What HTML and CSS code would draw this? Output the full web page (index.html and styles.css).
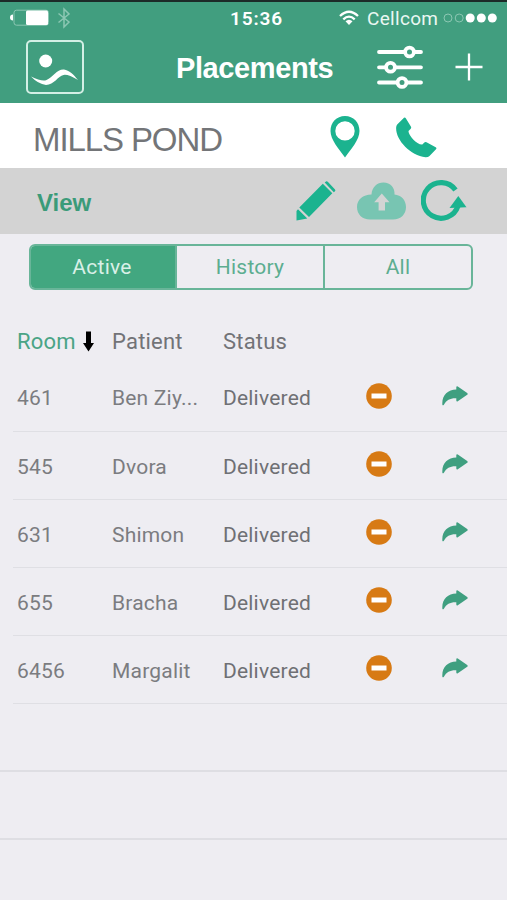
FILE: index.html
```html
<!DOCTYPE html>
<html lang="en">
<head>
<meta charset="utf-8">
<title>Placements</title>
<link rel="stylesheet" href="styles.css">
</head>
<body>
<svg class="defs" width="0" height="0">
  <symbol id="minus" viewBox="0 0 26 26"><circle cx="13" cy="13" r="12.8" fill="#d77a14"/><path d="M5.500 10.500h15v5h-15z" fill="#fff"/></symbol>
  <symbol id="share" viewBox="0 0 26 20"><path d="M.4 19C-.5 9.500 5.500 3.800 14.300 3.500V1.200Q14.500-.2 15.800 .6L25.200 7Q26.200 7.900 25.200 8.800L15.800 15.300Q14.500 16 14.300 14.500V12.300C8.500 12 4.500 14 1.900 18.700Q1 19.800 .4 19Z" fill="#3f9f80"/></symbol>
</svg>
<header class="header">
  <div class="status">
    <svg class="battery" width="64" height="24" viewBox="0 0 64 24"><path d="M4 8.500Q1 8.500 1 11.500T4 14.500Z" fill="#fff"/><rect x="5" y="4.200" width="34.500" height="15" rx="2.500" fill="none" stroke="#8cc7b3"/><rect x="17" y="4.500" width="22" height="14.500" rx="1.500" fill="#fff"/><path d="M49.500 7.500L60 16 55 21V3L60 8 49.500 16.500" fill="none" stroke="#8cc7b3" stroke-width="1.500"/></svg>
    <span class="time">15:36</span>
    <svg class="wifi" width="20" height="16" viewBox="0 0 20 16"><g fill="none" stroke="#fff" stroke-width="2.300"><path d="M1 6Q10-2.500 19 6"/><path d="M4.300 9.300Q10 4 15.700 9.300"/></g><path d="M6.500 11.300Q10 8.300 13.500 11.300L10 15Z" fill="#fff"/></svg>
    <span class="carrier">Cellcom</span>
    <svg class="signal" width="54" height="12" viewBox="0 0 54 12"><g fill="none" stroke="#8cc7b3"><circle cx="5" cy="6" r="4"/><circle cx="16.200" cy="6" r="4"/></g><g fill="#fff"><circle cx="27.200" cy="6" r="4.500"/><circle cx="38.300" cy="6" r="4.500"/><circle cx="49.300" cy="6" r="4.500"/></g></svg>
  </div>
  <div class="nav">
    <svg class="logo" width="58" height="54" viewBox="0 0 58 54"><rect x="1" y="1" width="56" height="52" rx="4" fill="none" stroke="#d3efe5" stroke-width="2"/><circle cx="19.700" cy="21" r="6.500" fill="#fff"/><path d="M5 36.500Q16 42 20.500 40C27 37 31 29 38 29.500 43 30 48 35 52 40Q42 34 37.500 35C32 36 28 45 20 45Q12 44 5 36.500Z" fill="#fff"/></svg>
    <h1 class="title">Placements</h1>
    <svg class="sliders" width="46" height="44" viewBox="0 0 46 44"><g fill="none" stroke="#fff" stroke-linecap="round" stroke-width="3.800"><path d="M2 7h25M38 7h6M2 22.300h6M19 22.300h25M2 37.500h17.500M30.500 37.500H44"/><circle cx="32.500" cy="7" r="4.400"/><circle cx="13.500" cy="22.300" r="4.400"/><circle cx="25" cy="37.500" r="4.400"/></g></svg>
    <svg class="plus" width="28" height="28" viewBox="0 0 28 28"><path d="M.5 14h27M14 .5v27" stroke="#fff" stroke-width="2.300"/></svg>
  </div>
</header>
<section class="facility">
  <h2 class="facility-name">MILLS POND</h2>
  <svg class="pin" width="30" height="42" viewBox="0 0 30 42"><path fill-rule="evenodd" d="M15 0C6.500 0 .5 6.500 .5 15 .5 24 9 33 15 41.500 21 33 29.500 24 29.500 15 29.500 6.500 23.500 0 15 0ZM15 5.200A9.700 9.700 0 1 1 15 24.600 9.700 9.700 0 0 1 15 5.200Z" fill="#1bb38f"/></svg>
  <svg class="phone" width="41" height="41" viewBox="0 0 41 41"><path d="M1.200 7.500L8 .8Q9 0 9.800 1.200L15 9.800Q15.600 11 14.500 12L12.500 14C12.300 18 21 28 26.300 27.500L28.700 25.300Q29.500 24.600 30.500 25.200L39.700 30.300Q41 31 40 32.200L33.500 39Q32 40.300 29.500 40.200C14 38.500-1 22 .2 10Q.3 8.500 1.200 7.500Z" fill="#1bb38f"/></svg>
</section>
<section class="toolbar">
  <span class="toolbar-title">View</span>
  <svg class="pencil" width="40" height="40" viewBox="0 0 40 40"><path d="M26.800 2.800L36.300 12.300 13 36 3.300 26.500ZM28.700 1.500L30 .5Q31 0 32 1L39 8.500Q39.800 9.500 39 10.200L37.800 11.300ZM2 28.300L11.300 37.500 .5 39.500V30Z" fill="#1bb38f"/></svg>
  <svg class="cloud" width="49" height="38" viewBox="0 0 49 38"><path d="M13 37.500C5 37.500 0 32 0 25 0 17.500 6 12.500 14.500 12.500 15 5 20 .5 26.500 .5 33.500 .5 38 5.500 37.500 12.500 44 13 49 18 49 25 49 32 44 37.500 36 37.500Z" fill="#78c5b2"/><path d="M24.800 11.500L32.500 20.200H28V28.500H21.600V20.200H17.200Z" fill="#d3d4d4"/></svg>
  <svg class="reload" width="46" height="42" viewBox="0 0 46 42"><path d="M34.500 10A17.800 17.800 0 1 0 37 26" fill="none" stroke="#1bb38f" stroke-width="5.200"/><path d="M37.300 16L45.500 27.300 28.500 28Z" fill="#1bb38f"/></svg>
</section>
<main class="content">
  <div class="tabs"><span class="tab tab-active">Active</span><span class="tab">History</span><span class="tab">All</span></div>
  <div class="row head"><span class="sorted">Room <svg class="arrow" width="11" height="21" viewBox="0 0 11 21"><path d="M3 .5h5V12h3L5.500 20.500 0 12h3z"/></svg></span><span>Patient</span><span>Status</span></div>
  <div class="list">
    <div class="row"><span>461</span><span class="patient">Ben Ziy...</span><span class="state">Delivered</span><svg class="minus"><use href="#minus"/></svg><svg class="share"><use href="#share"/></svg></div>
    <div class="row"><span>545</span><span class="patient">Dvora</span><span class="state">Delivered</span><svg class="minus"><use href="#minus"/></svg><svg class="share"><use href="#share"/></svg></div>
    <div class="row"><span>631</span><span class="patient">Shimon</span><span class="state">Delivered</span><svg class="minus"><use href="#minus"/></svg><svg class="share"><use href="#share"/></svg></div>
    <div class="row"><span>655</span><span class="patient">Bracha</span><span class="state">Delivered</span><svg class="minus"><use href="#minus"/></svg><svg class="share"><use href="#share"/></svg></div>
    <div class="row"><span>6456</span><span class="patient">Margalit</span><span class="state">Delivered</span><svg class="minus"><use href="#minus"/></svg><svg class="share"><use href="#share"/></svg></div>
  </div>
  <div class="blank"></div>
  <div class="blank"></div>
</main>
</body>
</html>
```
FILE: styles.css
```css
* { box-sizing: border-box; }
body {
  margin: 0;
  width: 507px;
  height: 900px;
  overflow: hidden;
  background: #eeedf2;
  color: #7b7c80;
  font-family: Roboto, "Liberation Sans", sans-serif;
  font-size: 21px;
}
svg { display: block; flex: none; }
.defs { position: absolute; }
h1, h2 { margin: 0; }
.header {
  height: 103px;
  background: #419e7f;
  border-top: 2px solid #1c2b28;
  color: #fff;
}
.status {
  display: grid;
  grid-template-columns: 221px 109px 28px 76px 54px;
  align-items: center;
  height: 32px;
  padding-left: 9px;
}
.time { font-size: 19px; font-weight: 600; letter-spacing: 0.9px; }
.carrier { font-size: 19px; letter-spacing: 0.3px; color: #eaf7f2; }
.nav {
  display: grid;
  grid-template-columns: 150px 201px 78px 28px;
  align-items: center;
  height: 66px;
  padding-left: 26px;
}
.title {
  font: bold 29px "Liberation Sans", sans-serif;
  letter-spacing: -0.4px;
  padding-top: 2px;
}
.facility {
  display: grid;
  grid-template-columns: 297px 66px 41px;
  align-items: center;
  height: 65px;
  padding: 3px 0 0 33px;
  background: #fff;
}
.facility-name { font: 33px "Liberation Sans", sans-serif; letter-spacing: -1.1px; color: #737578; padding-top: 5px; }
.toolbar {
  display: grid;
  grid-template-columns: 259px 61px 64px 46px;
  align-items: center;
  height: 66px;
  padding: 0 0 1px 37px;
  background: #d3d3d3;
}
.toolbar-title { font: bold 24px "Liberation Sans", sans-serif; color: #3b9b79; padding-top: 4px; }
.content { padding-top: 10px; }
.tabs {
  display: flex;
  width: 444px;
  height: 46px;
  margin-left: 29px;
  border: 2px solid #69b599;
  border-radius: 6px;
  background: #eeedf2;
  overflow: hidden;
}
.tab {
  flex: 1;
  display: flex;
  align-items: center;
  justify-content: center;
  color: #5cad90;
  letter-spacing: 0.25px;
}
.tab + .tab { border-left: 2px solid #69b599; }
.tabs .tab-active { margin: -2px 0 -2px -2px; background: #42a780; color: #d9f0e7; }
.row {
  display: grid;
  grid-template-columns: 95px 111px 143px 76px 28px;
  align-items: center;
  height: 68px;
  margin-left: 13px;
  padding-left: 4px;
  border-bottom: 1px solid #dfdfe4;
  letter-spacing: 0.2px;
}
.row.head { height: 44px; margin-top: 29px; border: 0; color: #727377; font-size: 22px; }
.sorted { display: flex; align-items: center; gap: 7px; color: #4aa486; }
.list .row:first-child { height: 69px; }
.list .row > span { padding-top: 2px; }
.state { color: #6f7074; }
.minus { width: 26px; height: 26px; margin-top: -3px; }
.share { width: 26px; height: 20px; margin-top: -3px; }
.blank { height: 68px; border-bottom: 2px solid #dedee3; }
```
